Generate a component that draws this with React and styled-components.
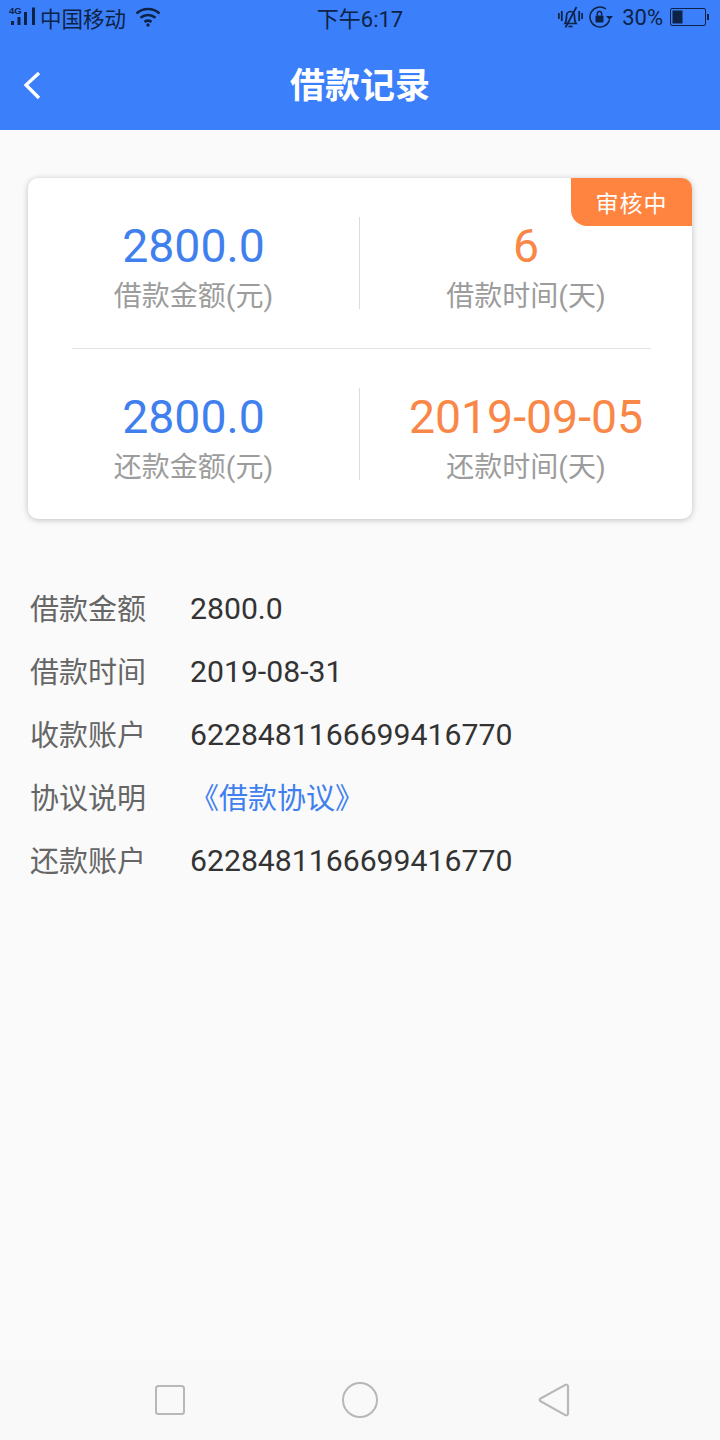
import React from 'react'
import styled, { createGlobalStyle } from 'styled-components'

const GlobalStyle = createGlobalStyle`
  html, body {
    margin: 0;
    padding: 0;
    background: #fafafa;
    font-family: "Roboto", "Noto Sans CJK SC", sans-serif;
  }
`
const Page = styled.div`
  width: 720px;
  height: 1440px;
  display: flex;
  flex-direction: column;
  background: #fafafa;
  overflow: hidden;
`
const Header = styled.header`
  height: 130px;
  flex: none;
  background: #3b7ffb;
  display: flex;
  flex-direction: column;
`
const StatusBar = styled.div`
  height: 38px;
  box-sizing: border-box;
  padding-bottom: 4px;
  display: grid;
  grid-template-columns: 1fr auto 1fr;
  align-items: center;
  color: #0d2346;
  font-size: 22px;
`
const StatusLeft = styled.div`
  display: flex;
  align-items: center;
  padding-left: 9px;
`
const Carrier = styled.span`
  margin: 0 9px 0 2px;
  font-size: 21.5px;
`
const StatusRight = styled.div`
  display: flex;
  align-items: center;
  justify-content: flex-end;
  gap: 8px;
  padding-right: 11px;
`
const Percent = styled.span`
  font-size: 22px;
  margin: 0 -1px 0 1px;
`
const BellWrap = styled.span`
  display: flex;
  margin-right: -2px;
`
const TitleBar = styled.div`
  flex: 1;
  position: relative;
  display: flex;
  align-items: center;
  justify-content: center;
  padding-top: 6px;
`
const BackButton = styled.button`
  position: absolute;
  left: 22px;
  top: 32px;
  padding: 0;
  border: 0;
  background: none;
  display: flex;
`
const Title = styled.h1`
  margin: 0;
  font-size: 35px;
  line-height: 44px;
  font-weight: 700;
  color: #fff;
`
const Main = styled.main`
  flex: 1;
  padding: 48px 28px 0;
`
const Card = styled.section`
  position: relative;
  height: 341px;
  box-sizing: border-box;
  padding-top: 39px;
  background: #fff;
  border-radius: 10px;
  box-shadow: 0 1px 6px rgba(0, 0, 0, 0.24);
`
const Badge = styled.div`
  position: absolute;
  top: 0;
  right: 0;
  width: 121px;
  height: 48px;
  display: flex;
  align-items: center;
  justify-content: center;
  background: #ff8440;
  border-radius: 0 10px 0 16px;
  color: #fff;
  font-size: 23px;
  letter-spacing: 1px;
`
const StatRow = styled.div`
  display: grid;
  grid-template-columns: 331px 1fr;
  grid-template-rows: 92px;
`
const Stat = styled.div`
  display: flex;
  flex-direction: column;
  align-items: center;
  border-left: ${p => (p.$right ? '1px solid #dcdcdc' : 'none')};
`
const StatValue = styled.div`
  font-size: 46.4px;
  line-height: 58px;
  color: ${p => (p.$orange ? '#f98748' : '#3f80ee')};
`
const StatLabel = styled.div`
  font-size: 28px;
  line-height: 34px;
  margin-top: 5px;
  color: #9c9c9c;
`
const Divider = styled.hr`
  margin: 39px 41px 39px 44px;
  border: 0;
  border-top: 1px solid #e2e2e2;
`
const Details = styled.dl`
  margin: 67px 0 0;
  padding-left: 2px;
  display: flex;
  flex-direction: column;
  gap: 21px;
`
const DetailRow = styled.div`
  display: flex;
  align-items: center;
  height: 42px;
`
const DetailLabel = styled.dt`
  width: 160px;
  font-size: 29px;
  color: #666;
`
const DetailValue = styled.dd`
  margin: 0;
  padding-top: ${p => (p.$link ? '0' : '2px')};
  font-size: ${p => (p.$link ? '29px' : '30.2px')};
  color: ${p => (p.$link ? '#3f80ee' : '#333')};
`
const NavBar = styled.nav`
  height: 80px;
  flex: none;
  box-sizing: border-box;
  padding-left: 155px;
  background: #f9f9f9;
  display: flex;
  align-items: center;
  gap: 157px;
`
const TriangleWrap = styled.span`
  display: flex;
  margin-left: 3px;
`

const Signal = () => (
  <svg width="29" height="22" viewBox="0 0 29 22" fill="#0d2346">
    <text x="0" y="8" fontSize="9.500" fontFamily="Liberation Sans" fontWeight="700">4G</text>
    <rect x="2" y="15" width="3" height="4" />
    <rect x="8.500" y="11" width="3" height="8" />
    <rect x="15" y="6" width="3" height="13" />
    <rect x="23" y="1.500" width="3" height="17.500" />
  </svg>
)

const Wifi = () => (
  <svg width="26" height="20" viewBox="0 0 26 20" fill="none" stroke="#0d2346" strokeWidth="2.600">
    <path d="M1.500 6.500C8 0.500 18 0.500 24.500 6.500" />
    <path d="M5.500 10.800C10 7 16 7 20.500 10.800" />
    <path d="M9.500 14.800C11.500 13.500 14.500 13.500 16.500 14.800" />
    <circle cx="13" cy="18" r="1.700" fill="#0d2346" stroke="none" />
  </svg>
)

const MuteBell = () => (
  <svg width="25" height="24" viewBox="0 0 25 24" fill="none" stroke="#0d2346" strokeWidth="1.700">
    <path d="M7 18.500c1.500-2 1.500-4.500 1.500-7 0-3 1.800-5 4-5s4 2 4 5c0 2.500 0 5 1.500 7z" />
    <path d="M10.500 21.500h4" />
    <path d="M18.500 2L7.500 22.500" />
    <path d="M.8 8v6M3.800 6v10M21.200 6v10M24.200 8v6" strokeWidth="1.800" />
  </svg>
)

const RotationLock = () => (
  <svg width="24" height="22" viewBox="0 0 24 22" fill="none" stroke="#0d2346" strokeWidth="1.500">
    <path d="M20.500 14A10 10 0 1 1 17 3" />
    <path d="M17 10h7l-3.500 4z" fill="#0d2346" stroke="none" />
    <rect x="6.500" y="9.500" width="8" height="7" rx="1" fill="#0d2346" stroke="none" />
    <path d="M8.300 9.500V7.800a2.200 2.200 0 0 1 4.400 0v1.700" />
  </svg>
)

const Battery = () => (
  <svg width="39" height="18" viewBox="0 0 39 18">
    <rect x="0.500" y="0.500" width="35" height="17" rx="1.500" fill="none" stroke="#0d2346" />
    <rect x="2.500" y="2.500" width="10" height="13" fill="#0d2346" />
    <rect x="37" y="6" width="2" height="6" fill="#0d2346" />
  </svg>
)

const Back = () => (
  <svg width="20" height="30" viewBox="0 0 20 30" fill="none" stroke="#fff" strokeWidth="3.300">
    <path d="M17 3L4 15 17 28" />
  </svg>
)

const SquareIcon = () => (
  <svg width="30" height="30" viewBox="0 0 30 30" fill="none" stroke="#b8b8b8" strokeWidth="2">
    <rect x="1" y="1" width="28" height="28" rx="2.500" />
  </svg>
)

const CircleIcon = () => (
  <svg width="36" height="36" viewBox="0 0 36 36" fill="none" stroke="#b8b8b8" strokeWidth="2">
    <circle cx="18" cy="18" r="17" />
  </svg>
)

const TriangleIcon = () => (
  <svg width="32" height="36" viewBox="0 0 32 36" fill="none" stroke="#b8b8b8" strokeWidth="2.200" strokeLinejoin="round">
    <path d="M30 4.500v27c0 1.500-1.400 2.300-2.700 1.600L2.600 19.300c-1.200-.7-1.200-2.100 0-2.800L27.300 2.900c1.300-.7 2.700.1 2.700 1.600z" />
  </svg>
)

const details = [
  ['借款金额', '2800.0'],
  ['借款时间', '2019-08-31'],
  ['收款账户', '6228481166699416770'],
  ['协议说明', '《借款协议》', true],
  ['还款账户', '6228481166699416770'],
]

export default function App() {
  return (
    <Page>
      <GlobalStyle />
      <Header>
        <StatusBar>
          <StatusLeft>
            <Signal />
            <Carrier>中国移动</Carrier>
            <Wifi />
          </StatusLeft>
          <span>下午6:17</span>
          <StatusRight>
            <BellWrap><MuteBell /></BellWrap>
            <RotationLock />
            <Percent>30%</Percent>
            <Battery />
          </StatusRight>
        </StatusBar>
        <TitleBar>
          <BackButton><Back /></BackButton>
          <Title>借款记录</Title>
        </TitleBar>
      </Header>
      <Main>
        <Card>
          <Badge>审核中</Badge>
          <StatRow>
            <Stat>
              <StatValue>2800.0</StatValue>
              <StatLabel>借款金额(元)</StatLabel>
            </Stat>
            <Stat $right>
              <StatValue $orange>6</StatValue>
              <StatLabel>借款时间(天)</StatLabel>
            </Stat>
          </StatRow>
          <Divider />
          <StatRow>
            <Stat>
              <StatValue>2800.0</StatValue>
              <StatLabel>还款金额(元)</StatLabel>
            </Stat>
            <Stat $right>
              <StatValue $orange>2019-09-05</StatValue>
              <StatLabel>还款时间(天)</StatLabel>
            </Stat>
          </StatRow>
        </Card>
        <Details>
          {details.map(([label, value, link]) => (
            <DetailRow key={label}>
              <DetailLabel>{label}</DetailLabel>
              <DetailValue $link={link}>{value}</DetailValue>
            </DetailRow>
          ))}
        </Details>
      </Main>
      <NavBar>
        <SquareIcon />
        <CircleIcon />
        <TriangleWrap><TriangleIcon /></TriangleWrap>
      </NavBar>
    </Page>
  )
}
